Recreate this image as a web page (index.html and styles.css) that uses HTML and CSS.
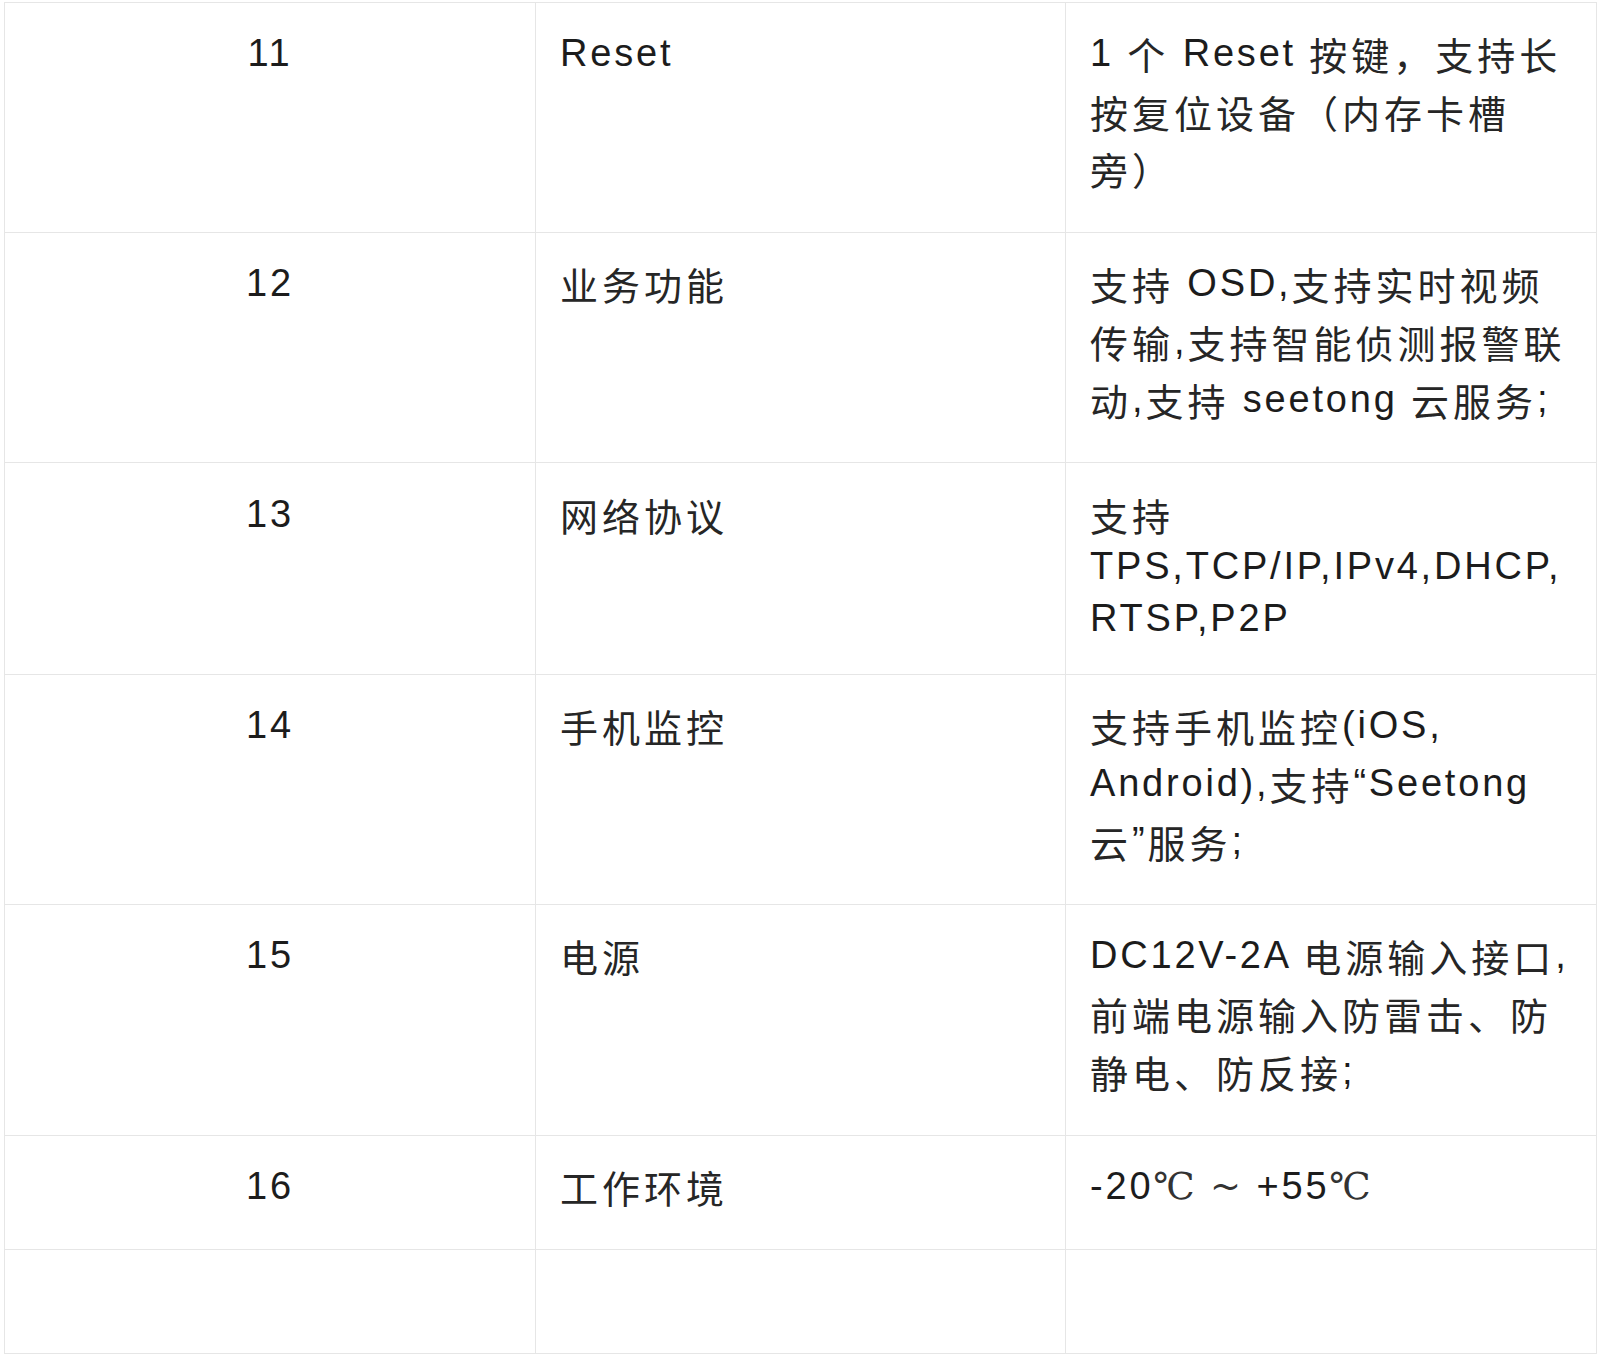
FILE: index.html
```html
<!DOCTYPE html>
<html lang="zh-CN">
<head>
<meta charset="utf-8">
<title>参数表</title>
<link rel="stylesheet" href="styles.css">
</head>
<body>
<div class="page">
  <table class="spec">
    <colgroup>
      <col class="c1">
      <col class="c2">
      <col class="c3">
    </colgroup>
    <tbody>
      <tr>
        <td class="num">11</td>
        <td class="name">Reset</td>
        <td class="desc">1 <span class="zh">个</span> Reset <span class="zh">按键，支持长按复位设备（内存卡槽旁）</span></td>
      </tr>
      <tr>
        <td class="num">12</td>
        <td class="name"><span class="zh">业务功能</span></td>
        <td class="desc"><span class="zh">支持</span> OSD,<span class="zh">支持实时视频传输</span>,<span class="zh">支持智能侦测报警联动</span>,<span class="zh">支持</span> seetong <span class="zh">云服务</span>;</td>
      </tr>
      <tr class="compact">
        <td class="num">13</td>
        <td class="name"><span class="zh">网络协议</span></td>
        <td class="desc"><span class="zh">支持</span> <span class="proto">TPS,TCP/IP,IPv4,DHCP,RTSP,P2P</span></td>
      </tr>
      <tr>
        <td class="num">14</td>
        <td class="name"><span class="zh">手机监控</span></td>
        <td class="desc"><span class="zh">支持手机监控</span>(iOS, Android),<span class="zh">支持</span>“Seetong <span class="zh">云</span>”<span class="zh">服务</span>;</td>
      </tr>
      <tr>
        <td class="num">15</td>
        <td class="name"><span class="zh">电源</span></td>
        <td class="desc">DC12V-2A <span class="zh">电源输入接口</span>,<span class="zh">前端电源输入防雷击、防静电、防反接</span>;</td>
      </tr>
      <tr>
        <td class="num">16</td>
        <td class="name"><span class="zh">工作环境</span></td>
        <td class="desc">-20<span class="sym">℃</span> <span class="sym">~</span> +55<span class="sym">℃</span></td>
      </tr>
      <tr class="blank">
        <td></td>
        <td></td>
        <td></td>
      </tr>
    </tbody>
  </table>
</div>
</body>
</html>
```

FILE: styles.css
```css
html, body {
  margin: 0;
  padding: 0;
  background: #ffffff;
}

.page {
  padding: 2px 4px 0 4px;
}

.spec {
  border-collapse: collapse;
  table-layout: fixed;
  width: 1592px;
  font-family: "Liberation Sans", "Noto Sans CJK SC", sans-serif;
  font-size: 38px;
  letter-spacing: 2.8px;
  color: #1c1c1c;
  text-spacing-trim: space-all;
}

.spec .c1 { width: 531px; }
.spec .c2 { width: 530px; }
.spec .c3 { width: 531px; }

.spec td {
  border: 1px solid #e6e6e6;
  padding: 22px 20px 34px 24px;
  line-height: 57.7px;
  vertical-align: top;
  text-align: left;
  overflow-wrap: break-word;
}

.spec td.num {
  text-align: center;
  padding-left: 22px;
  padding-right: 22px;
}

.spec tr.compact td {
  padding-top: 26px;
  padding-bottom: 30px;
  line-height: 51.7px;
}

.spec tr.blank td {
  height: 103px;
  padding: 0;
}

.zh {
  font-family: "Noto Sans CJK SC", sans-serif;
  font-size: 38px;
  letter-spacing: 4px;
  line-height: 30px;
  vertical-align: -4px;
  color: #262626;
  text-spacing-trim: space-all;
}

.sym {
  font-family: "DejaVu Serif", "Liberation Serif", "Noto Sans CJK SC", serif;
  font-size: 37px;
  letter-spacing: 2px;
  line-height: 30px;
  color: #333333;
}
```
